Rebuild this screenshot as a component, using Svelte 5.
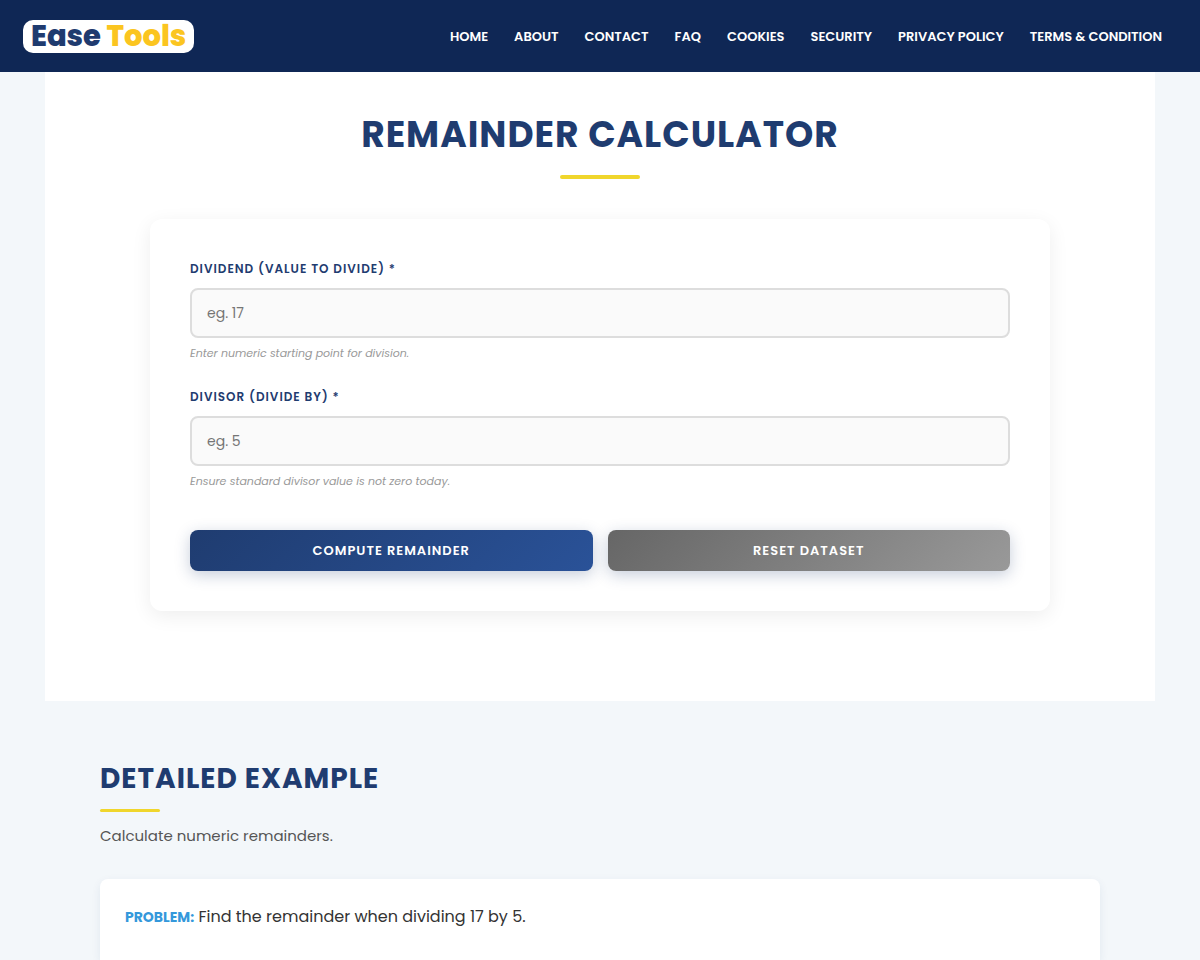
<script lang="ts">
	interface NavLink {
		label: string;
		href: string;
	}

	const links: NavLink[] = [
		{ label: 'Home', href: '#home' },
		{ label: 'About', href: '#about' },
		{ label: 'Contact', href: '#contact' },
		{ label: 'FAQ', href: '#faq' },
		{ label: 'Cookies', href: '#cookies' },
		{ label: 'Security', href: '#security' },
		{ label: 'Privacy Policy', href: '#privacy' },
		{ label: 'Terms & Condition', href: '#terms' }
	];

	let dividend = $state('');
	let divisor = $state('');
	let remainder = $state<number | null>(null);

	function compute(event: SubmitEvent): void {
		event.preventDefault();
		const a = parseFloat(dividend);
		const b = parseFloat(divisor);
		remainder = isNaN(a) || isNaN(b) || b === 0 ? null : a % b;
	}

	function reset(): void {
		dividend = '';
		divisor = '';
		remainder = null;
	}
</script>

<div class="page">
	<header>
		<a class="logo" href="#home">Ease <span>Tools</span></a>
		<nav>
			{#each links as link}
				<a href={link.href}>{link.label}</a>
			{/each}
		</nav>
	</header>

	<main>
		<section class="calculator">
			<h1>Remainder Calculator</h1>
			<form onsubmit={compute}>
				<div class="field">
					<label for="dividend">Dividend (value to divide) *</label>
					<input id="dividend" type="text" inputmode="decimal" placeholder="eg. 17" bind:value={dividend}>
					<small>Enter numeric starting point for division.</small>
				</div>
				<div class="field">
					<label for="divisor">Divisor (divide by) *</label>
					<input id="divisor" type="text" inputmode="decimal" placeholder="eg. 5" bind:value={divisor}>
					<small>Ensure standard divisor value is not zero today.</small>
				</div>
				<div class="actions">
					<button type="submit">Compute Remainder</button>
					<button type="button" class="reset" onclick={reset}>Reset Dataset</button>
				</div>
				{#if remainder !== null}
					<output for="dividend divisor">{remainder}</output>
				{/if}
			</form>
		</section>

		<section class="example">
			<h2>Detailed Example</h2>
			<p class="intro">Calculate numeric remainders.</p>
			<div class="card">
				<p><strong>Problem:</strong> Find the remainder when dividing 17 by 5.</p>
			</div>
		</section>
	</main>
</div>

<style>
	:global(body) {
		margin: 0;
		background: #f3f7fa;
		font-family: Poppins, Inter, sans-serif;
	}

	.page {
		display: flex;
		flex-direction: column;
		min-height: 100vh;
	}

	header {
		display: flex;
		align-items: center;
		justify-content: space-between;
		height: 72px;
		padding: 0 38px 0 23px;
		background: #0f2755;
	}

	.logo {
		padding: 0 8px;
		border-radius: 10px;
		background: #fff;
		color: #1f3b6f;
		font-size: 29px;
		font-weight: 800;
		line-height: 33px;
		text-decoration: none;
	}

	.logo span {
		color: #fbc520;
	}

	nav {
		display: flex;
		gap: 26px;
	}

	nav a {
		color: #fff;
		font-size: 13px;
		font-weight: 600;
		line-height: 21px;
		text-decoration: none;
		text-transform: uppercase;
		white-space: nowrap;
	}

	main {
		display: flex;
		flex: 1;
		flex-direction: column;
	}

	h1,
	h2 {
		margin: 0;
		color: #1f3c70;
		font-weight: 700;
		letter-spacing: 1px;
		text-transform: uppercase;
	}

	h1::after,
	h2::after {
		content: '';
		display: block;
		border-radius: 2px;
		background: #f0d62c;
	}

	.calculator {
		box-sizing: border-box;
		width: calc(100% - 90px);
		margin: 0 auto;
		padding: 40px 20px 90px;
		background: #fff;
	}

	h1 {
		font-size: 36px;
		line-height: 46px;
		text-align: center;
	}

	h1::after {
		width: 80px;
		height: 4px;
		margin: 17px auto 40px;
	}

	form {
		box-sizing: border-box;
		max-width: 900px;
		margin: 0 auto;
		padding: 40px;
		border-radius: 12px;
		background: #fff;
		box-shadow: 0 5px 20px rgba(0, 0, 0, 0.07);
	}

	.field {
		display: flex;
		flex-direction: column;
		margin-bottom: 25px;
	}

	label {
		margin-bottom: 9px;
		color: #1f3c70;
		font-size: 12px;
		font-weight: 600;
		letter-spacing: 1px;
		line-height: 20px;
		text-transform: uppercase;
	}

	input {
		box-sizing: border-box;
		width: 100%;
		height: 50px;
		padding: 0 15px;
		border: 2px solid #ddd;
		border-radius: 8px;
		background: #fafafa;
		color: #333;
		font-family: inherit;
		font-size: 14px;
	}

	input::placeholder {
		color: #757575;
	}

	small {
		margin-top: 6px;
		color: #999;
		font-size: 11px;
		font-style: italic;
		line-height: 18px;
	}

	.actions {
		display: flex;
		gap: 15px;
		margin-top: 40px;
	}

	button {
		flex: 1;
		height: 41px;
		border: 0;
		border-radius: 8px;
		background: linear-gradient(135deg, #1f3c70, #2a5298);
		box-shadow: 0 4px 15px rgba(31, 60, 112, 0.25);
		color: #fff;
		font-family: inherit;
		font-size: 13px;
		font-weight: 600;
		letter-spacing: 1px;
		text-transform: uppercase;
		cursor: pointer;
	}

	.reset {
		background: linear-gradient(135deg, #666, #999);
	}

	output {
		display: block;
		margin-top: 24px;
		color: #1f3c70;
		font-weight: 600;
	}

	.example {
		display: flex;
		flex: 1;
		flex-direction: column;
		box-sizing: border-box;
		width: calc(100% - 40px);
		max-width: 1000px;
		margin: 0 auto;
		padding-top: 60px;
	}

	h2 {
		font-size: 28px;
		line-height: 36px;
	}

	h2::after {
		width: 60px;
		height: 3px;
		margin: 12px 0;
	}

	.intro {
		margin: 0 0 31px;
		color: #555;
		font-size: 15px;
		line-height: 24px;
	}

	.card {
		flex: 1;
		padding: 24px 25px;
		border-radius: 8px 8px 0 0;
		background: #fff;
		box-shadow: 0 3px 10px rgba(31, 60, 112, 0.08);
	}

	.card p {
		margin: 0;
		color: #333;
		font-size: 16px;
		line-height: 27px;
	}

	strong {
		color: #3498db;
		font-size: 14px;
		font-weight: 700;
		text-transform: uppercase;
	}
</style>
